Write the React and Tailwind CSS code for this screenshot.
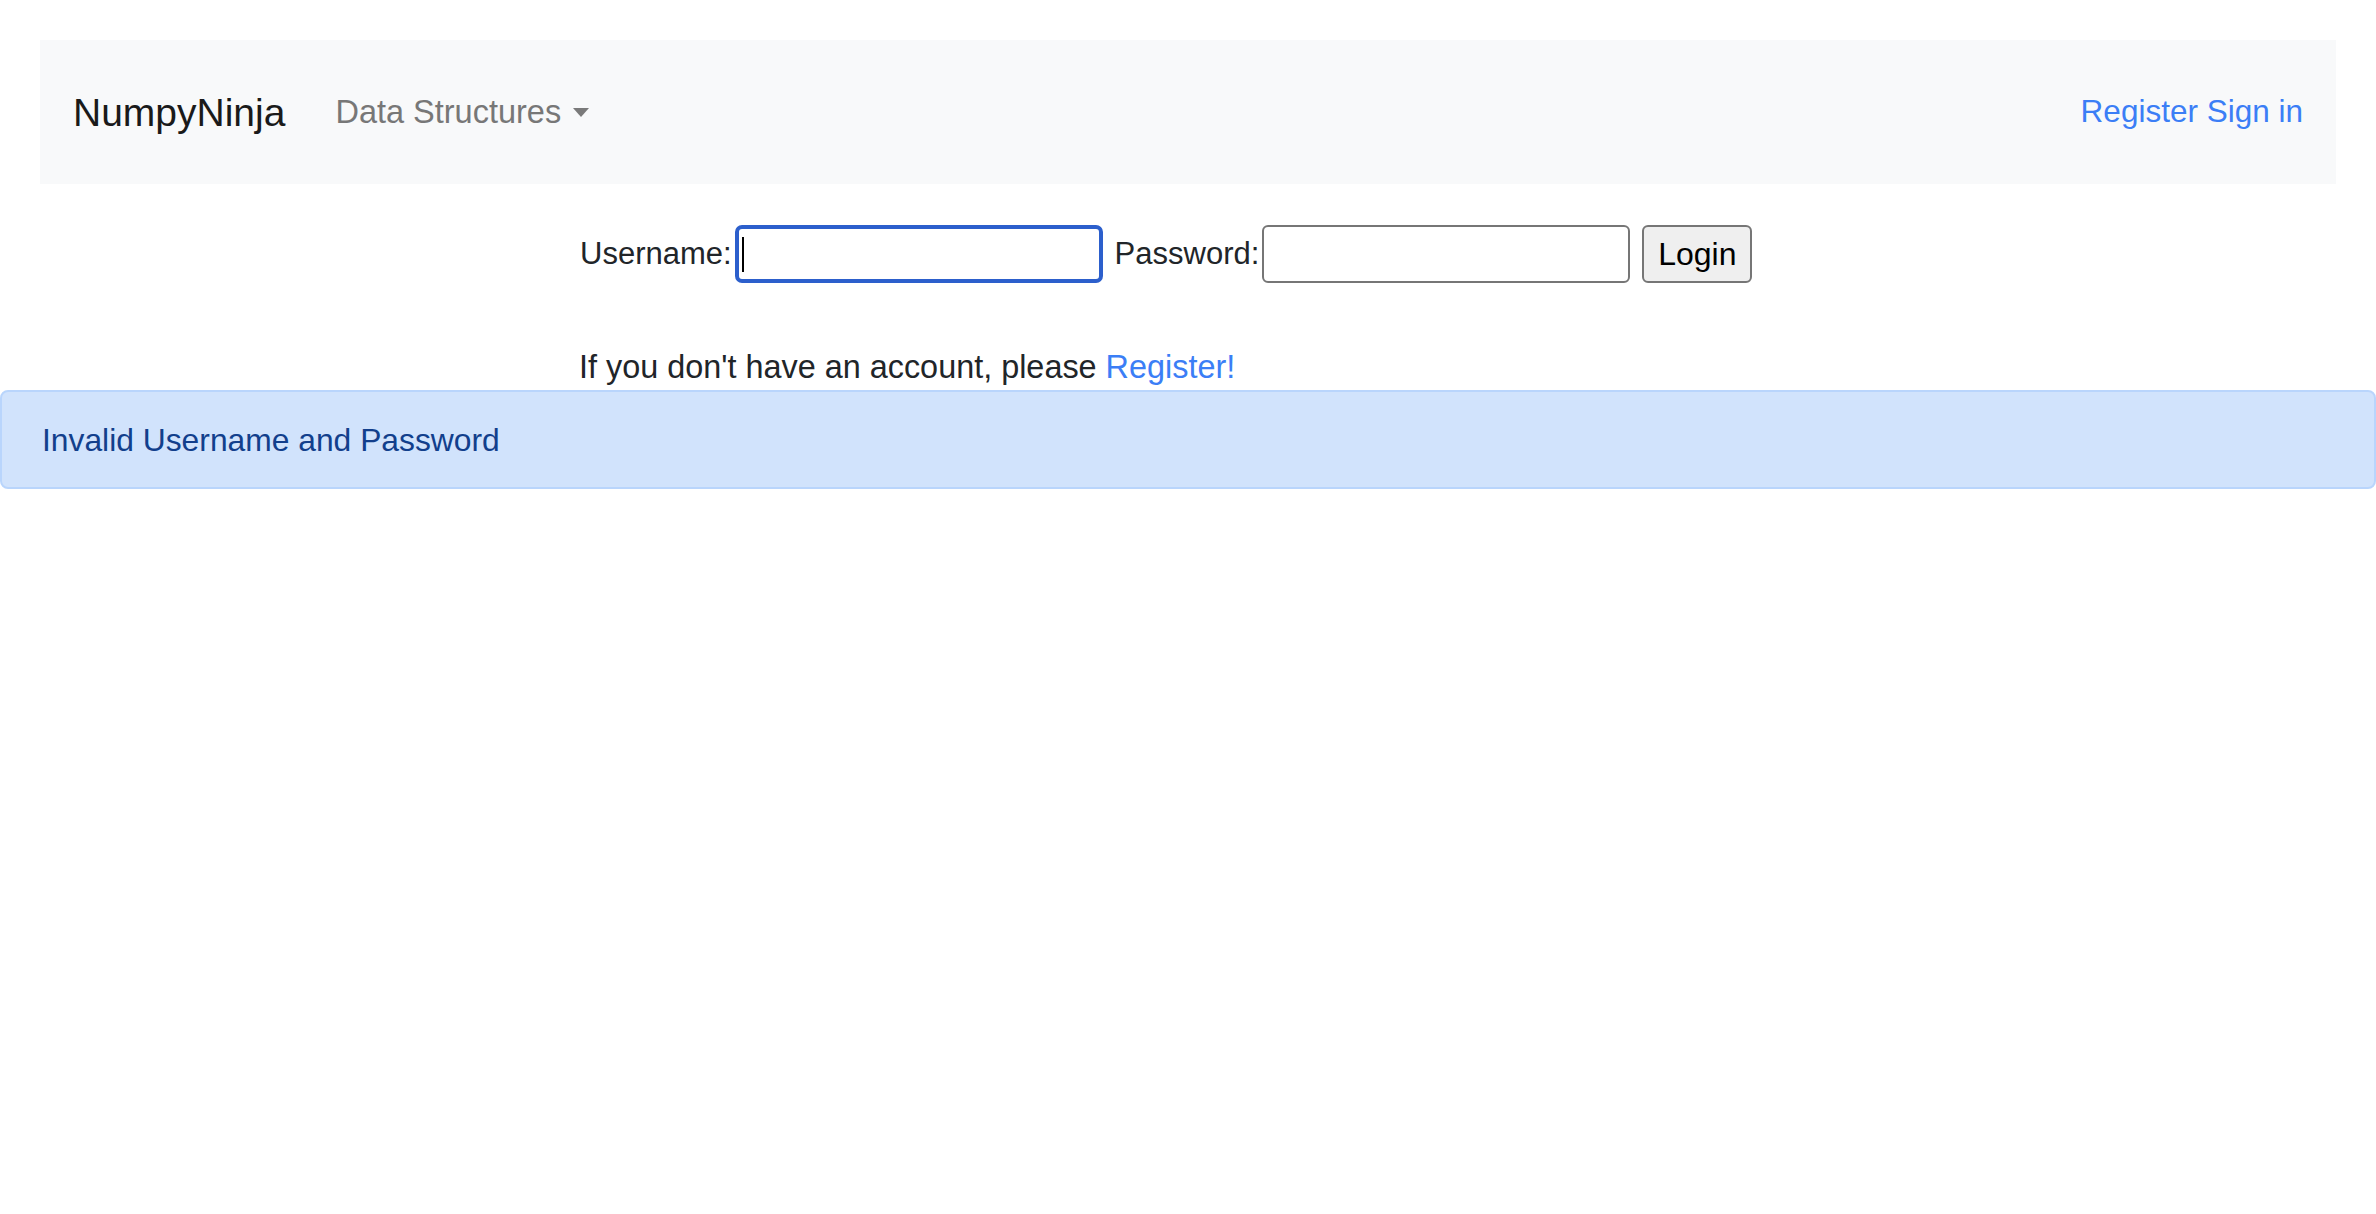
import React from 'react';

const Caret = () => (
  <svg width="16" height="9" viewBox="0 0 16 9" className="ml-[12px] mt-[1px]">
    <polygon points="0,0 16,0 8,9" fill="#7a7a7a" />
  </svg>
);

const App = () => {
  return (
    <div className="min-h-screen bg-white text-[#212529] font-['Liberation_Sans',Arial,sans-serif]">
      {/* Navbar */}
      <div className="px-[40px] pt-[40px]">
        <nav className="h-[144px] bg-[#f8f9fa] flex items-center justify-between pl-[33px] pr-[33px]">
          <div className="flex items-center">
            <a className="text-[39px] text-[#1a1a1a] leading-none">NumpyNinja</a>
            <button className="ml-[50px] flex items-center text-[32.5px] text-[#777777] leading-none">
              Data Structures
              <Caret />
            </button>
          </div>
          <div className="text-[31.5px] text-[#3b7ef6] leading-none">
            <a>Register</a> <a>Sign in</a>
          </div>
        </nav>
      </div>

      {/* Login form */}
      <form className="ml-[580px] mt-[41px] flex items-center h-[58px] text-[31px]" onSubmit={e => e.preventDefault()}>
        <label>Username:</label>
        <div className="ml-[3px] w-[368px] h-[58px] border-4 border-[#2c5fcc] rounded-[7px] bg-white flex items-center">
          <span className="ml-[3px] w-[2px] h-[35px] bg-black" />
        </div>
        <label className="ml-[12px]">Password:</label>
        <input type="password" className="ml-[3px] w-[368px] h-[58px] border-2 border-[#767676] rounded-[6px] bg-white outline-none" />
        <button type="submit" className="ml-[12px] w-[110px] h-[58px] border-2 border-[#767676] rounded-[6px] bg-[#efefef] text-[32px] text-black">
          Login
        </button>
      </form>

      <p className="ml-[579px] mt-[66px] text-[32.4px] leading-[36px]">
        If you don't have an account, please <a className="text-[#3b7ef6]">Register!</a>
      </p>

      {/* Alert */}
      <div className="mt-[5px] h-[99px] flex items-center bg-[#d1e3fc] border-2 border-[#b9d5fc] rounded-[8px] pl-[40px] pt-[3px] text-[31.8px] text-[#123f8c]">
        Invalid Username and Password
      </div>
    </div>
  );
};

export default App;
